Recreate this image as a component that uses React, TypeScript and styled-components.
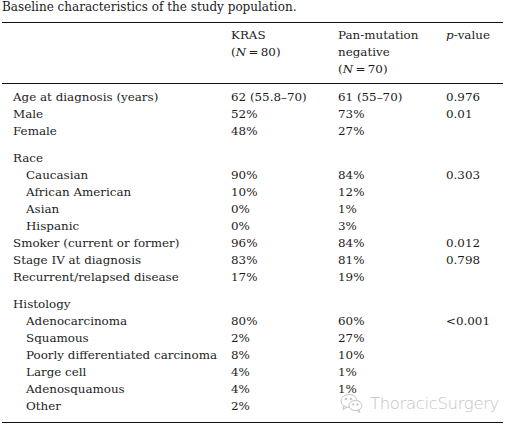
import React from "react";
import styled, { createGlobalStyle } from "styled-components";

const GlobalStyle = createGlobalStyle`
    body {
        margin: 0;
        background: #fff;
    }
`;

const Page = styled.div`
    position: relative;
    width: 515px;
    height: 429px;
    overflow: hidden;
    font-family: "DejaVu Serif", "Liberation Serif", serif;
    font-size: 11.9px;
    color: #1c1c1c;
`;

const Caption = styled.div`
    padding-left: 2px;
    line-height: 14px;
    height: 14px;
    margin-bottom: 8px;
    font-size: 12px;
`;

const Table = styled.table`
    margin-left: 2px;
    width: 501px;
    border-collapse: collapse;
    table-layout: fixed;
    border-top: 1px solid #111;
    border-bottom: 1px solid #111;

    thead {
        border-bottom: 1px solid #111;
    }

    th {
        font-weight: normal;
        text-align: left;
        vertical-align: top;
        line-height: 17px;
        padding: 4px 0 5px;
    }

    td {
        line-height: 17px;
        padding: 0;
        white-space: nowrap;
    }

    tbody tr:first-child td {
        padding-top: 5px;
    }

    tbody tr:last-child td {
        padding-bottom: 7px;
    }
`;

const Label = styled.td<{ indent?: boolean; gap?: boolean }>`
    && {
        padding-left: ${({ indent }) => (indent ? "24px" : "11px")};
        padding-top: ${({ gap }) => (gap ? "10px" : "0")};
    }
`;

const Cell = styled.td<{ gap?: boolean }>`
    && {
        padding-top: ${({ gap }) => (gap ? "10px" : "0")};
    }
`;

const Watermark = styled.div`
    position: absolute;
    left: 340px;
    top: 392px;
    display: flex;
    align-items: center;
    gap: 6px;
    color: #c4c4c4;
    font-family: "DejaVu Sans", sans-serif;
    font-weight: 200;
    font-size: 16.5px;
    letter-spacing: -0.35px;
`;

type Row = {
    label: string;
    kras?: string;
    pan?: string;
    p?: string;
    indent?: boolean;
    gap?: boolean;
};

const rows: Row[] = [
    { label: "Age at diagnosis (years)", kras: "62 (55.8–70)", pan: "61 (55–70)", p: "0.976" },
    { label: "Male", kras: "52%", pan: "73%", p: "0.01" },
    { label: "Female", kras: "48%", pan: "27%" },
    { label: "Race", gap: true },
    { label: "Caucasian", kras: "90%", pan: "84%", p: "0.303", indent: true },
    { label: "African American", kras: "10%", pan: "12%", indent: true },
    { label: "Asian", kras: "0%", pan: "1%", indent: true },
    { label: "Hispanic", kras: "0%", pan: "3%", indent: true },
    { label: "Smoker (current or former)", kras: "96%", pan: "84%", p: "0.012" },
    { label: "Stage IV at diagnosis", kras: "83%", pan: "81%", p: "0.798" },
    { label: "Recurrent/relapsed disease", kras: "17%", pan: "19%" },
    { label: "Histology", gap: true },
    { label: "Adenocarcinoma", kras: "80%", pan: "60%", p: "<0.001", indent: true },
    { label: "Squamous", kras: "2%", pan: "27%", indent: true },
    { label: "Poorly differentiated carcinoma", kras: "8%", pan: "10%", indent: true },
    { label: "Large cell", kras: "4%", pan: "1%", indent: true },
    { label: "Adenosquamous", kras: "4%", pan: "1%", indent: true },
    { label: "Other", kras: "2%", indent: true },
];

const WeChatIcon = () => (
    <svg width="24" height="22" viewBox="0 0 24 22" fill="none" stroke="#c4c4c4" strokeWidth="1">
        <ellipse cx="9" cy="9" rx="8" ry="6.5" />
        <path d="M4 14 L3 18 L7 15" />
        <ellipse cx="15.5" cy="13.5" rx="6.5" ry="5" fill="#fff" />
        <path d="M19 17.5 L20 20.5 L17 18.3" />
        <circle cx="6" cy="7" r="0.9" fill="#c4c4c4" />
        <circle cx="11" cy="7" r="0.9" fill="#c4c4c4" />
        <circle cx="13.3" cy="12.5" r="0.7" fill="#c4c4c4" />
        <circle cx="17.5" cy="12.5" r="0.7" fill="#c4c4c4" />
    </svg>
);

export default function App() {
    return (
        <Page>
            <GlobalStyle />
            <Caption>Baseline characteristics of the study population.</Caption>
            <Table>
                <colgroup>
                    <col style={{ width: 229 }} />
                    <col style={{ width: 107 }} />
                    <col style={{ width: 108 }} />
                    <col style={{ width: 57 }} />
                </colgroup>
                <thead>
                    <tr>
                        <th />
                        <th>
                            KRAS
                            <br />(<i>N</i>{"\u2009=\u2009"}80)
                        </th>
                        <th>
                            Pan-mutation
                            <br />
                            negative
                            <br />(<i>N</i>{"\u2009=\u2009"}70)
                        </th>
                        <th>
                            <i>p</i>-value
                        </th>
                    </tr>
                </thead>
                <tbody>
                    {rows.map((r) => (
                        <tr key={r.label}>
                            <Label indent={r.indent} gap={r.gap}>
                                {r.label}
                            </Label>
                            <Cell gap={r.gap}>{r.kras}</Cell>
                            <Cell gap={r.gap}>{r.pan}</Cell>
                            <Cell gap={r.gap}>{r.p}</Cell>
                        </tr>
                    ))}
                </tbody>
            </Table>
            <Watermark>
                <WeChatIcon />
                ThoracicSurgery
            </Watermark>
        </Page>
    );
}
